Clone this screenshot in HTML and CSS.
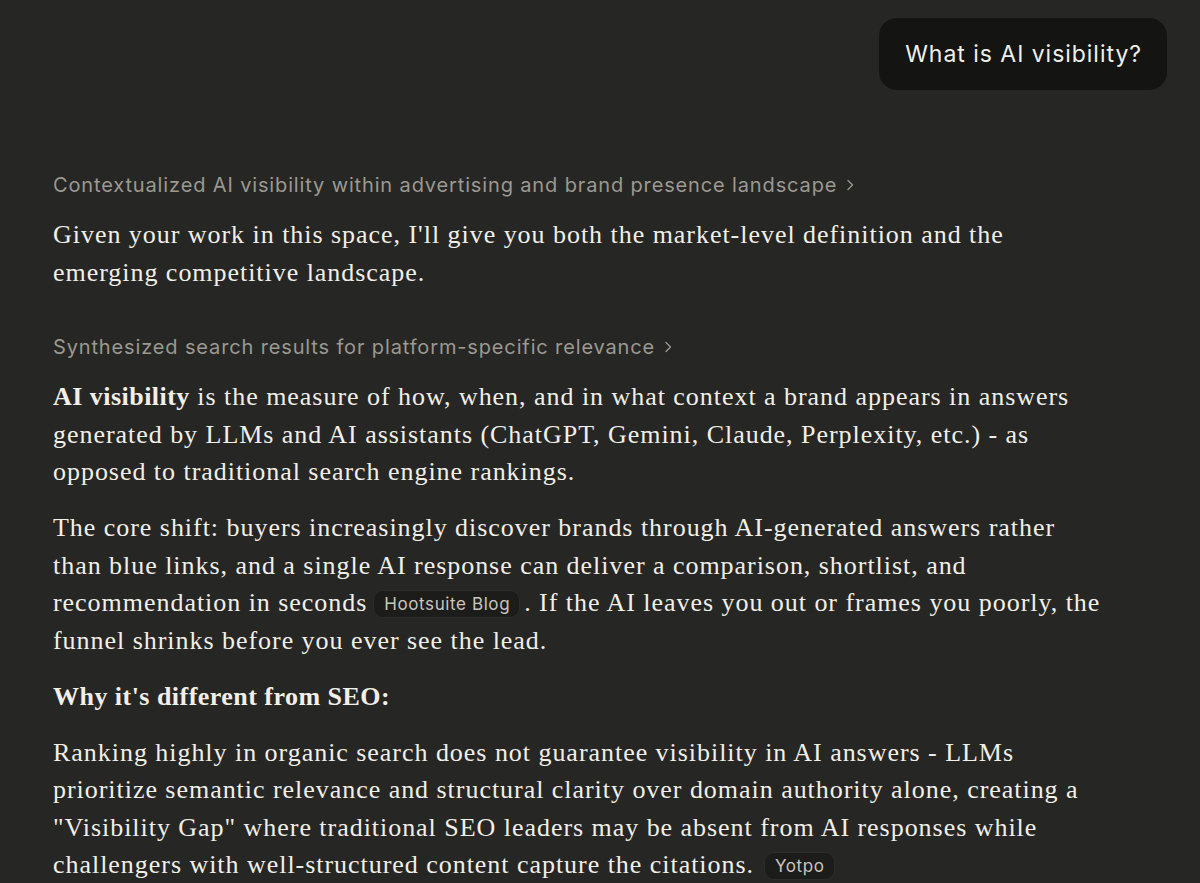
FILE: index.html
```html
<!DOCTYPE html>
<html lang="en">
<head>
<meta charset="utf-8">
<title>What is AI visibility?</title>
<link rel="stylesheet" href="styles.css">
</head>
<body>
<main class="thread">
  <div class="user-row">
    <div class="bubble">What is AI visibility?</div>
  </div>

  <div class="response">
    <div class="thought">Contextualized AI visibility within advertising and brand presence landscape<svg class="chev" viewBox="0 0 10 14" width="10" height="14"><path d="M3 2.5 L7.5 7 L3 11.5" /></svg></div>
    <p class="para">Given your work in this space, I'll give you both the market-level definition and the emerging competitive landscape.</p>

    <div class="thought thought-gap">Synthesized search results for platform-specific relevance<svg class="chev" viewBox="0 0 10 14" width="10" height="14"><path d="M3 2.5 L7.5 7 L3 11.5" /></svg></div>
    <p class="para"><strong>AI visibility</strong> is the measure of how, when, and in what context a brand appears in answers generated by LLMs and AI assistants (ChatGPT, Gemini, Claude, Perplexity, etc.) - as opposed to traditional search engine rankings.</p>
    <p class="para">The core shift: buyers increasingly discover brands through AI-generated answers rather than blue links, and a single AI response can deliver a comparison, shortlist, and recommendation in seconds<span class="chip">Hootsuite Blog</span>. If the AI leaves you out or frames you poorly, the funnel shrinks before you ever see the lead.</p>
    <p class="para"><strong>Why it's different from SEO:</strong></p>
    <p class="para">Ranking highly in organic search does not guarantee visibility in AI answers - LLMs prioritize semantic relevance and structural clarity over domain authority alone, creating a "Visibility Gap" where traditional SEO leaders may be absent from AI responses while challengers with well-structured content capture the citations.<span class="chip chip-end">Yotpo</span></p>
  </div>
</main>
</body>
</html>
```

FILE: styles.css
```css
html, body {
  margin: 0;
  padding: 0;
}

body {
  background: #262624;
  color: #f1efe8;
  font-family: "Liberation Serif", "Times New Roman", serif;
  -webkit-font-smoothing: antialiased;
}

.thread {
  padding: 18px 33px 0 53px;
}

.user-row {
  display: flex;
  justify-content: flex-end;
}

.bubble {
  background: #141413;
  color: #f1efe8;
  font-family: "Inter", "Noto Sans", sans-serif;
  font-size: 23px;
  letter-spacing: 0.042em;
  height: 72px;
  display: flex;
  align-items: center;
  padding: 0 25px 0 26px;
  border-radius: 18px;
  box-sizing: border-box;
}

.response {
  margin-top: 81px;
  width: 1056px;
}

.thought {
  font-family: "Inter", "Noto Sans", sans-serif;
  font-size: 20px;
  letter-spacing: 0.043em;
  line-height: 28px;
  color: #9b9991;
  display: flex;
  align-items: center;
  margin-bottom: 17px;
}

.thought-gap {
  margin-top: 42px;
}

.chev {
  margin-left: 8px;
  fill: none;
  stroke: #9b9991;
  stroke-width: 1.3;
  stroke-linecap: round;
  stroke-linejoin: round;
}

.para {
  font-size: 26px;
  letter-spacing: 0.037em;
  line-height: 37.5px;
  margin: 0 0 18.5px 0;
}

.para strong {
  font-weight: 700;
  letter-spacing: 0.018em;
}

.chip {
  display: inline-block;
  font-family: "Inter", "Noto Sans", sans-serif;
  font-size: 17px;
  letter-spacing: 0.035em;
  line-height: 26px;
  height: 28px;
  box-sizing: border-box;
  padding: 0 9px 0 10px;
  margin: 0 4px 0 6px;
  border-radius: 10px;
  background: #1c1c1b;
  border: 1px solid #2c2c2a;
  color: #c8c6be;
  vertical-align: 1px;
}

.chip-end {
  margin-left: 10px;
}
```
